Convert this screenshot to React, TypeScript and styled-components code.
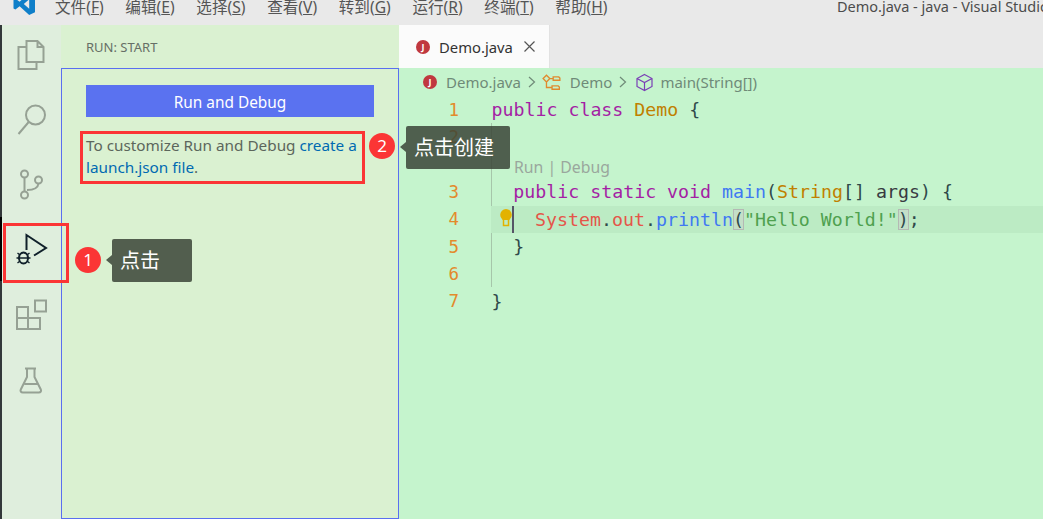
import * as React from "react";
import styled, { createGlobalStyle } from "styled-components";

const UI_FONT = `"Noto Sans", "Noto Sans CJK SC", sans-serif`;
const CODE_FONT = `"DejaVu Sans Mono", monospace`;

const GlobalStyle = createGlobalStyle`
  html, body { margin: 0; padding: 0; overflow: hidden; }
  body { font-family: ${UI_FONT}; background: #c5f4cd; }
`;

const Page = styled.div`
  position: relative;
  width: 1043px;
  height: 519px;
  display: flex;
  flex-direction: column;
  overflow: hidden;
`;

/* title bar */
const MenuBar = styled.div`
  height: 25px;
  flex: none;
  background: #e9e9e9;
  display: flex;
  align-items: flex-start;
  overflow: hidden;
  color: #555;
  font-size: 15.6px;
  line-height: 14px;
`;

const Logo = styled.svg`
  width: 24px;
  height: 24px;
  margin: -8px 19px 0 12px;
  flex: none;
`;

const MenuItem = styled.span`
  margin-right: 21.7px;
  white-space: nowrap;
  u { text-underline-offset: 1px; }
`;

const WindowTitle = styled.span`
  position: absolute;
  left: 837px;
  top: 0;
  font-size: 14.5px;
  line-height: 13px;
  color: #4c4c4c;
  white-space: nowrap;
`;

const Main = styled.div`
  flex: 1;
  display: flex;
  min-height: 0;
`;

/* activity bar */
const ActivityBar = styled.div`
  width: 59px;
  flex: none;
  background: #dfeedd;
  border-left: 2px solid #33383a;
  display: flex;
  flex-direction: column;
`;

const ActivityItem = styled.div<{ $active?: boolean }>`
  height: 64px;
  display: flex;
  align-items: center;
  justify-content: center;
  box-shadow: ${(p) => (p.$active ? "-2px 0 0 #000" : "none")};
`;

const ActivityIcon = styled.svg<{ $active?: boolean }>`
  width: 40px;
  height: 40px;
  fill: none;
  stroke: ${(p) => (p.$active ? "#10202a" : "#96a194")};
  stroke-width: 2;
`;

/* side bar */
const SideBar = styled.div`
  width: 338px;
  flex: none;
  background: #daf1d1;
  display: flex;
  flex-direction: column;
`;

const SideHeader = styled.div`
  height: 43px;
  flex: none;
  padding-left: 25px;
  display: flex;
  align-items: center;
  font-size: 13px;
  color: #666f66;
`;

const SideBody = styled.div`
  flex: 1;
  border: 1px solid #5a6ff0;
  padding: 16px 24px 0;
`;

const RunButton = styled.div`
  height: 32px;
  padding-top: 2px;
  box-sizing: border-box;
  background: #5a72f0;
  color: #fff;
  font-size: 15.4px;
  display: flex;
  align-items: center;
  justify-content: center;
`;

const Hint = styled.p`
  margin: 17px 0 0;
  font-size: 15.3px;
  line-height: 22px;
  color: #5c665c;
  white-space: nowrap;
`;

const HintLink = styled.span`
  color: #006ab1;
`;

/* editor */
const Editor = styled.div`
  flex: 1;
  min-width: 0;
  display: flex;
  flex-direction: column;
  background: #c5f4cd;
`;

const TabBar = styled.div`
  height: 43px;
  flex: none;
  background: #e9e9e9;
  display: flex;
`;

const Tab = styled.div`
  width: 151px;
  background: #fbfbfb;
  border-right: 1px solid #e2e2e2;
  box-sizing: border-box;
  padding-left: 17px;
  display: flex;
  align-items: center;
  font-size: 14.8px;
  color: #333;
`;

const JavaBadge = styled.span`
  width: 14px;
  height: 14px;
  border-radius: 50%;
  background: #c0383f;
  color: #fff;
  font-size: 9px;
  font-weight: 700;
  line-height: 14px;
  text-align: center;
  flex: none;
`;

const TabName = styled.span`
  margin: 0 11px 0 9px;
`;

const CloseIcon = styled.svg`
  width: 11px;
  height: 11px;
  stroke: #555;
  stroke-width: 1.2;
  fill: none;
`;

const Breadcrumbs = styled.div`
  height: 28px;
  flex: none;
  padding-left: 24px;
  display: flex;
  align-items: center;
  font-size: 15px;
  color: #6f8a78;
  white-space: nowrap;
`;

const Crumb = styled.span<{ $gap?: number }>`
  margin-left: ${(p) => p.$gap ?? 9}px;
`;

const Chevron = styled.svg`
  width: 8px;
  height: 12px;
  margin-left: 7px;
  fill: none;
  stroke: #6f8a78;
  stroke-width: 1.2;
`;

const CrumbIcon = styled.svg<{ $gap?: number }>`
  width: 19px;
  height: 19px;
  margin-left: ${(p) => p.$gap ?? 6}px;
  fill: none;
  stroke-width: 1.2;
`;

const Code = styled.div`
  position: relative;
  font-family: ${CODE_FONT};
  font-size: 18.25px;
`;

const Line = styled.div<{ $current?: boolean }>`
  position: relative;
  height: 27.4px;
  display: flex;
  align-items: center;
  white-space: pre;
  color: #2f4a4a;
  &::before {
    content: "";
    position: absolute;
    left: 92px;
    right: 0;
    top: 0;
    bottom: 0;
    background: ${(p) => (p.$current ? "#bcebc4" : "transparent")};
  }
`;

const LineNumber = styled.span`
  position: relative;
  width: 60px;
  flex: none;
  text-align: right;
  color: #e38a2c;
  font-size: 17.5px;
`;

const LineText = styled.span<{ $indent?: number }>`
  position: relative;
  margin-left: ${(p) => 32.5 + (p.$indent ?? 0) * 21.8}px;
`;

const Lens = styled.div`
  height: 27.4px;
  padding: 5px 0 0 115px;
  box-sizing: border-box;
  font-family: ${UI_FONT};
  font-size: 15.8px;
  line-height: 22px;
  color: #9aa79d;
`;

const IndentGuide = styled.div`
  position: absolute;
  left: 92px;
  top: 27px;
  width: 1px;
  height: 164px;
  background: #a6c6aa;
`;

const Bulb = styled.svg`
  position: absolute;
  left: 101px;
  top: 3px;
  width: 12px;
  height: 22px;
`;

const Cursor = styled.div`
  position: absolute;
  left: 113px;
  top: 0;
  bottom: 0;
  width: 1.5px;
  background: #556;
`;

const Keyword = styled.span`color: #a41fa4;`;
const TypeName = styled.span`color: #c08000;`;
const Field = styled.span`color: #e4564a;`;
const Method = styled.span`color: #4078f2;`;
const Str = styled.span`color: #4fa14f;`;
const Param = styled.span`color: #383a42;`;
const Match = styled.span`
  outline: 1px solid #b4b9b4;
  outline-offset: -1px;
  background: #c4dfc8;
`;

/* annotations drawn over the screenshot */
const RedBox = styled.div<{ $x: number; $y: number; $w: number; $h: number }>`
  position: absolute;
  left: ${(p) => p.$x}px;
  top: ${(p) => p.$y}px;
  width: ${(p) => p.$w}px;
  height: ${(p) => p.$h}px;
  box-sizing: border-box;
  border: 3px solid #fb3535;
`;

const Badge = styled.div<{ $x: number; $y: number }>`
  position: absolute;
  left: ${(p) => p.$x}px;
  top: ${(p) => p.$y}px;
  width: 26px;
  height: 26px;
  border-radius: 50%;
  background: #fb3535;
  color: #fff;
  font-size: 17px;
  line-height: 25px;
  text-align: center;
`;

const Tip = styled.div<{ $x: number; $y: number; $w: number }>`
  position: absolute;
  left: ${(p) => p.$x}px;
  top: ${(p) => p.$y}px;
  width: ${(p) => p.$w}px;
  height: 43px;
  box-sizing: border-box;
  padding-left: 8px;
  border-radius: 2px;
  background: rgba(58, 68, 55, 0.85);
  color: #fff;
  font-size: 20px;
  line-height: 43px;
  &::before {
    content: "";
    position: absolute;
    left: -6px;
    top: 16px;
    border-style: solid;
    border-width: 5px 6px 5px 0;
    border-color: transparent rgba(58, 68, 55, 0.85) transparent transparent;
  }
`;

const menus: [string, string][] = [
  ["文件", "F"],
  ["编辑", "E"],
  ["选择", "S"],
  ["查看", "V"],
  ["转到", "G"],
  ["运行", "R"],
  ["终端", "T"],
  ["帮助", "H"],
];

const ChevronRight = () => (
  <Chevron viewBox="0 0 8 12">
    <path d="M1 1l5.5 5-5.5 5" />
  </Chevron>
);

export default function App() {
  return (
    <Page>
      <GlobalStyle />
      <MenuBar>
        <Logo viewBox="0 0 24 24">
          <path fill="#0f7fc9" d="M17.2 1 23 3.7v16.6L17.2 23 7.6 14.200l-4.200 3.200L1.500 16.400V7.600l1.900-1 4.200 3.200zM17.200 7.300l-5.400 4.700 5.400 4.700z" />
        </Logo>
        {menus.map(([name, key]) => (
          <MenuItem key={key}>
            {name}(<u>{key}</u>)
          </MenuItem>
        ))}
        <WindowTitle>Demo.java - java - Visual Studio Code</WindowTitle>
      </MenuBar>
      <Main>
        <ActivityBar>
          <ActivityItem>
            <ActivityIcon viewBox="0 0 40 40">
              <path d="M14.500 25V4h11l6 6v15zM25.500 4v6h6" />
              <path d="M14.500 10H6.500v22h18v-7" />
            </ActivityIcon>
          </ActivityItem>
          <ActivityItem>
            <ActivityIcon viewBox="0 0 40 40">
              <circle cx="23.500" cy="14" r="9.500" />
              <path d="M16.700 21 6.500 33" />
            </ActivityIcon>
          </ActivityItem>
          <ActivityItem>
            <ActivityIcon viewBox="0 0 40 40">
              <circle cx="12.500" cy="9" r="3.500" />
              <circle cx="26.500" cy="15" r="3.500" />
              <circle cx="12.500" cy="30" r="3.500" />
              <path d="M12.500 12.500v14M15 25c7 0 11-2 11.500-6.500" />
            </ActivityIcon>
          </ActivityItem>
          <ActivityItem $active>
            <ActivityIcon viewBox="0 0 40 40" $active>
              <path d="M14.500 21V6l19.500 13-12 7.500" />
              <ellipse cx="11.500" cy="29" rx="4.500" ry="5.500" />
              <path d="M7 29h9M5.500 24l2.500 2M17.500 24 15 26M5.500 34l2.500-2M17.500 34 15 32M4.500 29h2.500M16 29h2.500" strokeWidth="1.400" />
            </ActivityIcon>
          </ActivityItem>
          <ActivityItem>
            <ActivityIcon viewBox="0 0 40 40">
              <path d="M5 14h11v22H5zM5 25h23v11H16M16 14v11" />
              <rect x="23" y="7.500" width="11" height="11" />
            </ActivityIcon>
          </ActivityItem>
          <ActivityItem>
            <ActivityIcon viewBox="0 0 40 40">
              <path d="M13 11.500h11M15 11.500v8.500L8.800 32.500c-.8 1.800.2 3 2 3h16c1.800 0 2.800-1.200 2-3L22.500 20v-8.500M12.500 27h13" />
            </ActivityIcon>
          </ActivityItem>
        </ActivityBar>
        <SideBar>
          <SideHeader>RUN: START</SideHeader>
          <SideBody>
            <RunButton>Run and Debug</RunButton>
            <Hint>
              To customize Run and Debug <HintLink>create a</HintLink>
              <br />
              <HintLink>launch.json file</HintLink>.
            </Hint>
          </SideBody>
        </SideBar>
        <Editor>
          <TabBar>
            <Tab>
              <JavaBadge>J</JavaBadge>
              <TabName>Demo.java</TabName>
              <CloseIcon viewBox="0 0 11 11">
                <path d="M.5.500l10 10M10.500.500l-10 10" />
              </CloseIcon>
            </Tab>
          </TabBar>
          <Breadcrumbs>
            <JavaBadge>J</JavaBadge>
            <Crumb>Demo.java</Crumb>
            <ChevronRight />
            <CrumbIcon viewBox="0 0 17 17" stroke="#e08a2e">
              <path d="M1 5 4 2l3 3-3 3zM7 5h3M4 8v5h5M10 3.500h5l1 1v2h-6zM9 11.500h5.500l1 1v2H9z" />
            </CrumbIcon>
            <Crumb>Demo</Crumb>
            <ChevronRight />
            <CrumbIcon viewBox="0 0 19 19" stroke="#7a3fb5" $gap={8}>
              <path d="M9.500 1.500 17 5.500v8l-7.500 4-7.500-4v-8zM2 5.500l7.500 4 7.500-4M9.500 9.500v8" />
            </CrumbIcon>
            <Crumb $gap={6}>main(String[])</Crumb>
          </Breadcrumbs>
          <Code>
            <IndentGuide />
            <Line>
              <LineNumber>1</LineNumber>
              <LineText>
                <Keyword>public class</Keyword> <TypeName>Demo</TypeName> {"{"}
              </LineText>
            </Line>
            <Line>
              <LineNumber>2</LineNumber>
            </Line>
            <Lens>Run | Debug</Lens>
            <Line>
              <LineNumber>3</LineNumber>
              <LineText $indent={1}>
                <Keyword>public static void</Keyword> <Method>main</Method>(
                <TypeName>String</TypeName>[] <Param>args</Param>) {"{"}
              </LineText>
            </Line>
            <Line $current>
              <LineNumber>4</LineNumber>
              <LineText $indent={2}>
                <Field>System</Field>.<Field>out</Field>.<Method>println</Method>
                <Match>(</Match>
                <Str>"Hello World!"</Str>
                <Match>)</Match>;
              </LineText>
              <Cursor />
              <Bulb viewBox="0 0 12 22">
                <path fill="#e2b200" d="M6 0a5.800 5.800 0 0 1 5.800 5.800c0 2.600-1.600 3.600-2.300 5.200H2.500C1.800 9.400.2 8.400.2 5.800A5.800 5.800 0 0 1 6 0z" />
                <path fill="none" stroke="#e2b200" strokeWidth="1.500" d="M3.500 11v5.500h5V11" />
              </Bulb>
            </Line>
            <Line>
              <LineNumber>5</LineNumber>
              <LineText $indent={1}>{"}"}</LineText>
            </Line>
            <Line>
              <LineNumber>6</LineNumber>
            </Line>
            <Line>
              <LineNumber>7</LineNumber>
              <LineText>{"}"}</LineText>
            </Line>
          </Code>
        </Editor>
      </Main>

      <RedBox $x={3} $y={223} $w={66} $h={60} />
      <Badge $x={75} $y={247}>1</Badge>
      <Tip $x={112} $y={239} $w={80}>点击</Tip>
      <RedBox $x={80} $y={131} $w={285} $h={53} />
      <Badge $x={369} $y={133}>2</Badge>
      <Tip $x={406} $y={126} $w={104}>点击创建</Tip>
    </Page>
  );
}
